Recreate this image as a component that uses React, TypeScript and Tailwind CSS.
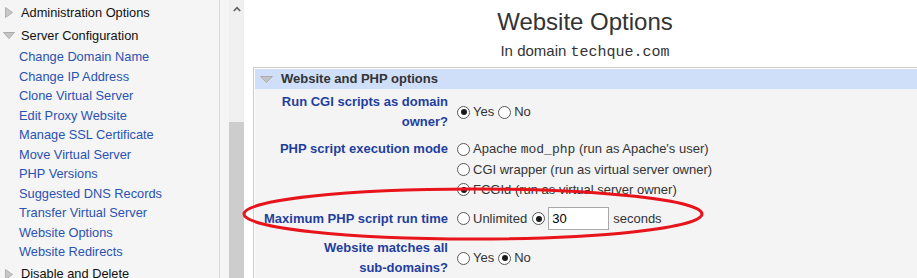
import React from "react";

const SANS = { fontFamily: '"Liberation Sans", Arial, sans-serif' };
const MONO = { fontFamily: '"Liberation Mono", "Courier New", monospace' };

function TriRight() {
  return (
    <svg width="8" height="11" viewBox="0 0 8 11" className="shrink-0">
      <polygon points="0.5,0.5 7.5,5.5 0.5,10.5" fill="#c8c8c8" stroke="#b0b0b0" strokeWidth="1" />
    </svg>
  );
}

function TriDown({ w = 12, h = 7 }: { w?: number; h?: number }) {
  return (
    <svg width={w} height={h} viewBox={`0 0 ${w} ${h}`} className="shrink-0">
      <polygon points={`0.5,0.5 ${w - 0.5},0.5 ${w / 2},${h - 0.5}`} fill="#c4c4c4" stroke="#acacac" strokeWidth="1" />
    </svg>
  );
}

function Radio({ checked = false, className = "" }: { checked?: boolean; className?: string }) {
  return (
    <span
      className={
        "inline-flex shrink-0 items-center justify-center w-[13px] h-[13px] rounded-full border border-[#5a5a5a] bg-white mr-[3px] " +
        className
      }
    >
      {checked ? <span className="block w-[6px] h-[6px] rounded-full bg-[#1a1a1a]" /> : null}
    </span>
  );
}

const links = [
  "Change Domain Name",
  "Change IP Address",
  "Clone Virtual Server",
  "Edit Proxy Website",
  "Manage SSL Certificate",
  "Move Virtual Server",
  "PHP Versions",
  "Suggested DNS Records",
  "Transfer Virtual Server",
  "Website Options",
  "Website Redirects",
];

export default function App() {
  return (
    <div className="relative w-[917px] h-[278px] overflow-hidden flex bg-white" style={SANS}>
      {/* Sidebar */}
      <div className="w-[220px] h-full bg-[#f5f5f5] border-r border-[#d9d9d9] pt-[1px] text-[12.8px] shrink-0">
        <div className="h-[23px] flex items-center pl-[5px] text-[#111]">
          <TriRight />
          <span className="ml-[8px] whitespace-nowrap">Administration Options</span>
        </div>
        <div className="h-[23px] flex items-center pl-[3px] text-[#111]">
          <TriDown />
          <span className="ml-[6px] whitespace-nowrap">Server Configuration</span>
        </div>
        {links.map((l) => (
          <div key={l} className="h-[19.5px] leading-[19.5px] pl-[19px] text-[#2a52b3] whitespace-nowrap">
            {l}
          </div>
        ))}
        <div className="h-[25px] flex items-center pl-[5px] text-[#111]">
          <TriRight />
          <span className="ml-[8px] whitespace-nowrap">Disable and Delete</span>
        </div>
      </div>
      <div className="w-[9px] h-full bg-[#f5f5f5] shrink-0" />
      {/* Scrollbar */}
      <div className="w-[15px] h-full bg-[#f0f0f0] flex flex-col shrink-0">
        <div className="h-[17px] flex items-center justify-center">
          <svg width="8" height="6" viewBox="0 0 8 6">
            <polyline points="0.8,5 4,1.6 7.2,5" fill="none" stroke="#606060" strokeWidth="1.6" />
          </svg>
        </div>
        <div className="flex-1" />
        <div className="h-[156px] bg-[#cdcdcd]" />
      </div>
      {/* Main */}
      <div className="flex-1 h-full bg-white pl-[9px] flex flex-col min-w-0">
        <div className="mt-[8px] text-center text-[24px] leading-[28px] text-[#333]">Website Options</div>
        <div className="mt-[6px] text-center text-[15px] leading-[18px] text-[#333]">
          In domain <span style={MONO}>techque.com</span>
        </div>
        <div className="mt-[5px] flex-1 border-t border-l border-[#cccccc] bg-white pt-[1px] pl-[1px] flex flex-col">
          <div className="h-[20px] bg-[#cfdef9] flex items-center pl-[5px]">
            <TriDown w={13} h={7} />
            <span className="ml-[8px] text-[13px] font-bold text-[#333]">Website and PHP options</span>
          </div>
          <div className="flex-1 bg-[#f4f4f4] pt-[3px] grid grid-cols-[196px_1fr] gap-y-[7px] content-start text-[13px] leading-[20px] text-[#333]">
            {/* Row 1 */}
            <div className="text-right pr-[3px] font-bold text-[#1f3f9f] whitespace-nowrap">
              Run CGI scripts as domain
              <br />
              owner?
            </div>
            <div className="flex items-center pl-[6px]">
              <Radio checked />
              <span>Yes</span>
              <Radio className="ml-[4px]" />
              <span>No</span>
            </div>
            {/* Row 2 */}
            <div className="text-right pr-[3px] font-bold text-[#1f3f9f] whitespace-nowrap self-start">
              PHP script execution mode
            </div>
            <div className="flex flex-col pl-[6px]">
              <div className="h-[20px] flex items-center whitespace-nowrap">
                <Radio />
                <span>
                  Apache <span style={MONO}>mod_php</span> (run as Apache's user)
                </span>
              </div>
              <div className="h-[21px] flex items-center whitespace-nowrap">
                <Radio />
                <span>CGI wrapper (run as virtual server owner)</span>
              </div>
              <div className="h-[19px] flex items-center whitespace-nowrap">
                <Radio checked />
                <span>FCGId (run as virtual server owner)</span>
              </div>
            </div>
            {/* Row 3 */}
            <div className="self-center text-right pr-[3px] font-bold text-[#1f3f9f] whitespace-nowrap">
              Maximum PHP script run time
            </div>
            <div className="flex items-center pl-[6px] h-[25px]">
              <Radio />
              <span>Unlimited</span>
              <Radio checked className="ml-[5px]" />
              <input
                readOnly
                defaultValue="30"
                className="w-[61px] h-[23px] border border-[#a9a9a9] bg-white px-[3px] text-[13px] text-black outline-none"
                style={SANS}
              />
              <span className="ml-[4px]">seconds</span>
            </div>
            {/* Row 4 */}
            <div className="text-right pr-[3px] font-bold text-[#1f3f9f] whitespace-nowrap">
              Website matches all
              <br />
              sub-domains?
            </div>
            <div className="flex items-center pl-[6px]">
              <Radio />
              <span>Yes</span>
              <Radio checked className="ml-[4px]" />
              <span>No</span>
            </div>
          </div>
        </div>
      </div>
      {/* Red annotation ellipse */}
      <svg className="absolute left-0 top-0 pointer-events-none" width="917" height="278" viewBox="0 0 917 278">
        <ellipse cx="473" cy="214" rx="229" ry="25" fill="none" stroke="#e8141c" strokeWidth="3" />
      </svg>
    </div>
  );
}
